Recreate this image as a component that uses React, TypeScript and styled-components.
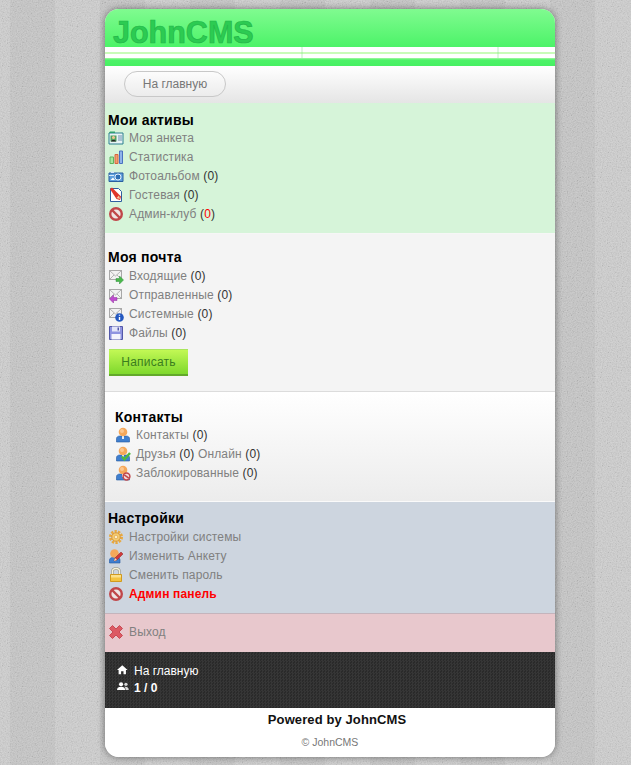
import React from 'react'
import styled, { createGlobalStyle } from 'styled-components'

const noise = `url("data:image/svg+xml,%3Csvg xmlns='http://www.w3.org/2000/svg' width='200' height='200'%3E%3Cfilter id='n'%3E%3CfeTurbulence type='fractalNoise' baseFrequency='.8' numOctaves='2'/%3E%3CfeColorMatrix values='1.6 0 0 0 -.3 1.6 0 0 0 -.3 1.6 0 0 0 -.3 0 0 0 0 .12'/%3E%3C/filter%3E%3Crect width='200' height='200' filter='url(%23n)'/%3E%3C/svg%3E")`

const GlobalStyle = createGlobalStyle`
	html, body {
		margin: 0;
		padding: 0;
	}
	body {
		font-family: 'Liberation Sans', Arial, sans-serif;
		font-size: 12px;
		background-color: #c9c9c9;
		background-image: ${noise},
			repeating-linear-gradient(90deg, #c6c6c6 10px, #c6c6c6 55px, #cecece 55px, #cecece 100px);
	}
`

const Page = styled.div`
	box-sizing: border-box;
	height: 765px;
	padding-top: 9px;
	overflow: hidden;
`

const Shell = styled.div`
	width: 450px;
	height: 748px;
	margin-left: 105px;
	border-radius: 14px;
	overflow: hidden;
	background: #fff;
	box-shadow: 0 0 7px rgba(0, 0, 0, 0.45);
	display: flex;
	flex-direction: column;
`

const Header = styled.header`
	height: 57px;
	flex: none;
	display: flex;
	flex-direction: column;
`

const LogoBand = styled.div`
	height: 38px;
	padding-left: 8px;
	background: linear-gradient(#80fb90, #4cf368);
	display: flex;
	align-items: center;
`

const Logo = styled.div`
	font-size: 30.5px;
	font-weight: bold;
	line-height: 1;
	margin-top: 9px;
	color: #2ccb52;
	-webkit-text-stroke: 0.7px #23b548;
`

const Stripes = styled.div`
	height: 19px;
	background:
		linear-gradient(90deg, transparent 196px, rgba(120, 220, 130, 0.25) 196px, rgba(120, 220, 130, 0.25) 198px, transparent 198px,
			transparent 392px, rgba(120, 220, 130, 0.25) 392px, rgba(120, 220, 130, 0.25) 394px, transparent 394px) 0 0 / 100% 11px no-repeat,
		linear-gradient(#fff 0, #fff 5px, #c9fcb9 5px, #c9fcb9 7px, #fff 7px, #fff 11px, #a4f8a4 11px, #4df268 13px, #46f062 19px);
`

const Nav = styled.nav`
	box-sizing: border-box;
	height: 37px;
	flex: none;
	padding: 5px 0 0 19px;
	background: linear-gradient(#fff, #e5e5e5);
`

const HomeButton = styled.div`
	box-sizing: border-box;
	width: 102px;
	height: 26px;
	border: 1px solid #c8c8c8;
	border-radius: 13px;
	background: linear-gradient(#fcfcfc, #ececec);
	color: #777;
	display: flex;
	align-items: center;
	justify-content: center;
`

const tones = {
	green: '#d6f4d9',
	light: '#f4f4f4',
	fade: 'linear-gradient(#fff, #ececec)',
	blue: '#cdd5df',
	pink: '#e8c8cd',
}

const Section = styled.section<{
	$tone: keyof typeof tones
	$top: number
	$bottom: number
	$inset?: number
	$line?: string
}>`
	flex: none;
	padding: ${(p) => p.$top}px 3px ${(p) => p.$bottom}px ${(p) => 3 + (p.$inset || 0)}px;
	background: ${(p) => tones[p.$tone]};
	border-bottom: ${(p) => (p.$line ? `1px solid ${p.$line}` : 'none')};
`

const Title = styled.h3<{ $gap?: number }>`
	margin: 0 0 ${(p) => p.$gap || 0}px;
	font-size: 14px;
	line-height: 16px;
	font-weight: bold;
	letter-spacing: 0.25px;
	color: #000;
`

const Row = styled.div`
	height: 19px;
	display: flex;
	align-items: center;
	gap: 5px;
	color: #333;
	letter-spacing: 0.15px;
	white-space: pre;
`

const Link = styled.span<{ $alert?: boolean }>`
	color: ${(p) => (p.$alert ? '#f00' : '#808080')};
	font-weight: ${(p) => (p.$alert ? 'bold' : 'normal')};
`

const Red = styled.span`
	color: #f00;
`

const WriteButton = styled.div`
	box-sizing: border-box;
	width: 79px;
	height: 27px;
	margin: 7px 0 0 1px;
	background: linear-gradient(#c2f855, #7ed82c);
	border-top: 1px solid #a9e65c;
	border-bottom: 2px solid #62a82a;
	color: #3a7d1e;
	letter-spacing: 0.2px;
	display: flex;
	align-items: center;
	justify-content: center;
`

const Footer = styled.footer`
	flex: none;
	height: 56px;
	box-sizing: border-box;
	padding: 10px 12px;
	background: repeating-conic-gradient(#363636 0 25%, #2a2a2a 0 50%) 0 0 / 3px 3px;
	color: #fff;
`

const FooterRow = styled.div<{ $bold?: boolean }>`
	height: 17px;
	display: flex;
	align-items: center;
	gap: 4px;
	font-weight: ${(p) => (p.$bold ? 'bold' : 'normal')};
`

const Credits = styled.div`
	flex: 1;
	display: flex;
	flex-direction: column;
	align-items: center;
	background: #fff;
`

const Powered = styled.div`
	margin: 5px 0 0 14px;
	line-height: 14px;
	font-size: 13px;
	font-weight: bold;
	letter-spacing: 0.1px;
	color: #111;
`

const Copy = styled.div`
	margin-top: 9px;
	line-height: 13px;
	font-size: 10.5px;
	color: #777;
`

const Glyph = styled.svg`
	flex: none;
	display: block;
`

const Envelope = () => (
	<>
		<rect x="1.5" y="2.5" width="12" height="9" fill="#f2f2f2" stroke="#a8a8a8" />
		<path d="M2 3l5.500 5L13 3M2 11l4-4M13 11L9 7" fill="none" stroke="#b4b4b4" />
	</>
)

const Person = () => (
	<>
		<path d="M1.500 15v-3.500C1.500 10 3 9 5 9h6c2 0 3.500 1 3.500 2.500V15z" fill="#3f7fcf" stroke="#23589f" strokeWidth=".6" />
		<path d="M7 9h2v3H7z" fill="#e8eef8" />
		<circle cx="8" cy="5" r="4.300" fill="#f5a85a" />
		<circle cx="7" cy="4" r="2" fill="#fbc78f" />
	</>
)

const icons: Record<string, React.ReactNode> = {
	card: (
		<>
			<path d="M1 3h14v11H1z" fill="#e8f4f4" stroke="#2a7f8f" />
			<path d="M1 3h6V1.500H2z" fill="#2f9f6f" />
			<path d="M2.500 5.500h6v6h-6z" fill="#4f9f5f" />
			<circle cx="5.500" cy="7.500" r="1.500" fill="#f3c490" />
			<path d="M3 11.500c0-2 5-2 5 0z" fill="#222" />
			<path d="M10 6h4M10 8h4M10 10h4" stroke="#6a8fb0" />
		</>
	),
	chart: (
		<>
			<path d="M2 8h3.500v6.500H2z" fill="#a6e8a0" stroke="#5fb45f" />
			<path d="M7 5.500h3v9H7z" fill="#f0a070" stroke="#d8653f" />
			<path d="M11.500 2h3v12.500h-3z" fill="#8fb4ea" stroke="#4a72c0" />
		</>
	),
	photo: (
		<>
			<path d="M1 5h14v8.500H1z" fill="#5f9fdc" stroke="#2a5f9f" />
			<path d="M3 3.500h3V5H3zM1 7h5v1H1z" fill="#d8e8f8" />
			<circle cx="10" cy="9" r="3" fill="#2f6fb4" stroke="#e4f0fb" />
			<path d="M2.500 12l2.500-2.500 2 2.500z" fill="#fff" />
		</>
	),
	guest: (
		<>
			<path d="M2.500 1.500h8l3 3v10h-11z" fill="#fff" stroke="#2f5f9f" />
			<path d="M2 2l2-1.500 9 9-1 3.500-3.500-1z" fill="#e0352b" />
			<path d="M12 12l-3.500-1 2.500-2.500z" fill="#f2c9a0" />
		</>
	),
	ban: (
		<>
			<circle cx="8" cy="8" r="5.800" fill="#efe4e4" stroke="#c0474a" strokeWidth="2.400" />
			<path d="M4 4l8 8" stroke="#c0474a" strokeWidth="2.400" />
		</>
	),
	mailIn: (
		<>
			<Envelope />
			<path d="M8 10.500h3.500V8l4 4-4 4v-2.500H8z" fill="#4ab84a" stroke="#2f8f3f" strokeWidth=".5" />
		</>
	),
	mailOut: (
		<>
			<Envelope />
			<path d="M9 10.500H5.500V8l-4 4 4 4v-2.500H9z" fill="#c04ad0" stroke="#8f2f9f" strokeWidth=".5" />
		</>
	),
	mailInfo: (
		<>
			<Envelope />
			<circle cx="11.500" cy="11.500" r="4.300" fill="#2458c0" />
			<path d="M11.500 8.800v1M11.500 11v3" stroke="#fff" strokeWidth="1.400" />
		</>
	),
	floppy: (
		<>
			<path d="M1.500 1.500h13v13h-13z" fill="#8f94e0" stroke="#5358a8" />
			<path d="M4 1.500h8v5H4z" fill="#e4e6f8" />
			<path d="M9.500 2.500h1.500v3H9.500z" fill="#5358a8" />
			<path d="M3.500 9h9v5.500h-9z" fill="#f4f4fc" />
		</>
	),
	contact: <Person />,
	friend: (
		<>
			<Person />
			<path d="M7 10.500l2.500 3L15 7" fill="none" stroke="#4fb83f" strokeWidth="2.400" />
		</>
	),
	blocked: (
		<>
			<Person />
			<circle cx="11.500" cy="11.500" r="3.400" fill="#f4d8d8" stroke="#c0474a" strokeWidth="1.500" />
			<path d="M9.300 9.800l4.400 3.400" stroke="#c0474a" strokeWidth="1.500" />
		</>
	),
	gear: (
		<>
			<circle cx="8" cy="8" r="5.500" fill="none" stroke="#e8a83f" strokeWidth="3" strokeDasharray="2.200 1.200" />
			<circle cx="8" cy="8" r="4.200" fill="#f6cf72" stroke="#d8963a" />
			<circle cx="8" cy="8" r="1.800" fill="#fbeec8" stroke="#d8963a" strokeWidth=".6" />
		</>
	),
	edit: (
		<>
			<path d="M1.500 15v-3C1.500 10.500 3 9.500 4.500 9.500h5c1.500 0 2.500 1 2.500 2.500v3z" fill="#3f7fcf" stroke="#23589f" strokeWidth=".6" />
			<circle cx="6.500" cy="5.500" r="4.300" fill="#f5a85a" />
			<path d="M6 13l1-3 6-6 2 2-6 6z" fill="#d03a3a" stroke="#8f2020" strokeWidth=".5" />
			<path d="M6 13l1-3 2 2z" fill="#f5e0b0" />
		</>
	),
	lock: (
		<>
			<path d="M4.500 8V4.500C4.500 .5 11.500 .5 11.500 4.500V8" fill="none" stroke="#8f8f80" strokeWidth="2.400" />
			<path d="M4.500 8V4.500C4.500 .5 11.500 .5 11.500 4.500V8" fill="none" stroke="#f4f0d8" strokeWidth="1.400" />
			<path d="M2.500 7.500h11v7h-11z" fill="#f4c43f" stroke="#d09a1f" />
			<path d="M3 8h10v2.500H3z" fill="#fbe08a" />
		</>
	),
	cross: <path d="M1.500 4.500l3-3L8 5l3.500-3.500 3 3L11 8l3.500 3.500-3 3L8 11l-3.500 3.500-3-3L5 8z" fill="#dc5a64" stroke="#c84a54" />,
	home: <path d="M6.500 1.500L0 7.500h2v5h3v-3.500h3v3.500h3v-5h2z" fill="#fff" />,
	users: (
		<>
			<circle cx="5" cy="4" r="2.500" fill="#fff" />
			<path d="M0 11c0-3 2-4 5-4s5 1 5 4z" fill="#fff" />
			<circle cx="11" cy="4" r="2" fill="#d8d8d8" />
			<path d="M10.500 11c0-2-.5-3-1.500-3.800 2.500-.6 5.500.3 5.500 3.800z" fill="#d8d8d8" />
		</>
	),
}

const Icon = ({ name, size = 16 }: { name: string; size?: number }) => (
	<Glyph width={size} height={size} viewBox="0 0 16 16">
		{icons[name]}
	</Glyph>
)

export default function App() {
	return (
		<Page>
			<GlobalStyle />
			<Shell>
				<Header>
					<LogoBand>
						<Logo>JohnCMS</Logo>
					</LogoBand>
					<Stripes />
				</Header>
				<Nav>
					<HomeButton>На главную</HomeButton>
				</Nav>

				<Section $tone="green" $top={9} $bottom={10} $line="#f6f6f6">
					<Title>Мои активы</Title>
					<Row><Icon name="card" /><Link>Моя анкета</Link></Row>
					<Row><Icon name="chart" /><Link>Статистика</Link></Row>
					<Row><Icon name="photo" /><span><Link>Фотоальбом</Link> (0)</span></Row>
					<Row><Icon name="guest" /><span><Link>Гостевая</Link> (0)</span></Row>
					<Row><Icon name="ban" /><span><Link>Админ-клуб</Link> (<Red>0</Red>)</span></Row>
				</Section>

				<Section $tone="light" $top={15} $bottom={15} $line="#dcdcdc">
					<Title $gap={1}>Моя почта</Title>
					<Row><Icon name="mailIn" /><span><Link>Входящие</Link> (0)</span></Row>
					<Row><Icon name="mailOut" /><span><Link>Отправленные</Link> (0)</span></Row>
					<Row><Icon name="mailInfo" /><span><Link>Системные</Link> (0)</span></Row>
					<Row><Icon name="floppy" /><span><Link>Файлы</Link> (0)</span></Row>
					<WriteButton>Написать</WriteButton>
				</Section>

				<Section $tone="fade" $top={17} $bottom={19} $inset={7} $line="#fafafa">
					<Title>Контакты</Title>
					<Row><Icon name="contact" /><span><Link>Контакты</Link> (0)</span></Row>
					<Row><Icon name="friend" /><span><Link>Друзья</Link> (0) <Link>Онлайн</Link> (0)</span></Row>
					<Row><Icon name="blocked" /><span><Link>Заблокированные</Link> (0)</span></Row>
				</Section>

				<Section $tone="blue" $top={8} $bottom={10} $line="#c4b4bc">
					<Title $gap={1}>Настройки</Title>
					<Row><Icon name="gear" /><Link>Настройки системы</Link></Row>
					<Row><Icon name="edit" /><Link>Изменить Анкету</Link></Row>
					<Row><Icon name="lock" /><Link>Сменить пароль</Link></Row>
					<Row><Icon name="ban" /><Link $alert>Админ панель</Link></Row>
				</Section>

				<Section $tone="pink" $top={8} $bottom={11}>
					<Row><Icon name="cross" /><Link>Выход</Link></Row>
				</Section>

				<Footer>
					<FooterRow><Icon name="home" size={13} />На главную</FooterRow>
					<FooterRow $bold><Icon name="users" size={13} />1 / 0</FooterRow>
				</Footer>

				<Credits>
					<Powered>Powered by JohnCMS</Powered>
					<Copy>© JohnCMS</Copy>
				</Credits>
			</Shell>
		</Page>
	)
}
